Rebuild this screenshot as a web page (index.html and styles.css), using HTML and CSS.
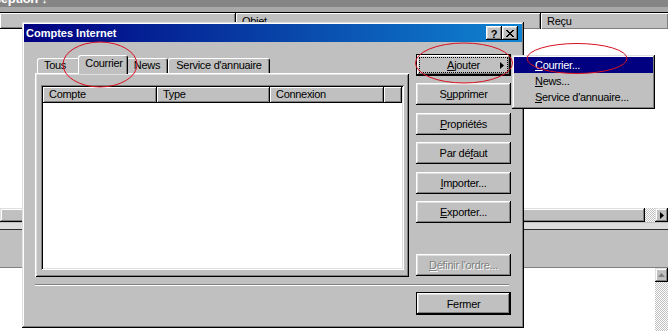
FILE: index.html
```html
<!DOCTYPE html>
<html lang="fr">
<head>
<meta charset="utf-8">
<title>Comptes Internet</title>
<link rel="stylesheet" href="styles.css">
</head>
<body>
<div class="screen">
  <div class="app-top"><span class="app-title">Boîte de réception ↓</span></div>
  <div class="app-sub"></div>
  <div class="colhead">
    <div class="ch ch-1"></div>
    <div class="ch ch-2">Objet</div>
    <div class="ch ch-3">Reçu</div>
  </div>
  <div class="msglist"></div>
  <div class="hscroll">
    <div class="thumb"></div>
    <div class="track"></div>
    <div class="sbtn"><svg width="4" height="7" viewBox="0 0 4 7"><path d="M0 0L4 3.5L0 7z" fill="#000"/></svg></div>
  </div>
  <div class="splitter"></div>
  <div class="preview-head"></div>
  <div class="preview">
    <div class="preview-body"></div>
    <div class="vscroll">
      <div class="sbtn sbtn-up"><svg width="7" height="4" viewBox="0 0 7 4"><path d="M0 4L3.5 0L7 4z" fill="#808080"/></svg></div>
      <div class="track"></div>
    </div>
  </div>
</div>

<div class="dialog">
  <div class="titlebar">
    <span class="title">Comptes Internet</span>
    <div class="tb-btns">
      <span class="tb-btn tb-help">?</span>
      <span class="tb-btn"><svg width="8" height="7" viewBox="0 0 8 7"><path fill="#000" d="M0 0h2v1h-2z M6 0h2v1h-2z M1 1h2v1h-2z M5 1h2v1h-2z M2 2h4v1h-4z M3 3h2v1h-2z M2 4h4v1h-4z M1 5h2v1h-2z M5 5h2v1h-2z M0 6h2v1h-2z M6 6h2v1h-2z"/></svg></span>
    </div>
  </div>
  <div class="dlg-body">
    <div class="main">
      <div class="tabs-col">
        <div class="tabstrip">
          <div class="tab t-tous">Tous</div>
          <div class="tab t-sel">Courrier</div>
          <div class="tab t-news">News</div>
          <div class="tab t-svc">Service d'annuaire</div>
        </div>
        <div class="panel">
          <div class="listview">
            <div class="lv-head">
              <div class="lv-h h-compte">Compte</div>
              <div class="lv-h h-type">Type</div>
              <div class="lv-h h-conn">Connexion</div>
              <div class="lv-h h-rest"></div>
            </div>
            <div class="lv-body"></div>
          </div>
        </div>
      </div>
      <div class="btn-col">
        <button class="btn btn-default btn-focus"><span><u>A</u>jouter</span><svg class="arrow" width="4" height="7" viewBox="0 0 4 7"><path d="M0 0L4 3.5L0 7z" fill="#000"/></svg></button>
        <button class="btn">S<u>u</u>pprimer</button>
        <button class="btn"><u>P</u>ropriétés</button>
        <button class="btn">Par dé<u>f</u>aut</button>
        <button class="btn"><u>I</u>mporter...</button>
        <button class="btn"><u>E</u>xporter...</button>
        <button class="btn btn-disabled btn-last"><u>D</u>éfinir l'ordre...</button>
      </div>
    </div>
    <div class="sep"></div>
    <div class="footer">
      <button class="btn btn-default btn-close">Fermer</button>
    </div>
  </div>
</div>

<div class="menu">
  <div class="mi sel"><u>C</u>ourrier...</div>
  <div class="mi"><u>N</u>ews...</div>
  <div class="mi"><u>S</u>ervice d'annuaire...</div>
</div>

<svg class="annot" width="668" height="331" viewBox="0 0 668 331">
  <ellipse cx="100" cy="64.5" rx="37" ry="22.5" fill="none" stroke="#d81020" stroke-width="1"/>
  <ellipse cx="464" cy="63" rx="48.5" ry="20" fill="none" stroke="#d81020" stroke-width="1"/>
  <ellipse cx="577" cy="58.5" rx="50" ry="15" fill="none" stroke="#d81020" stroke-width="1"/>
</svg>
</body>
</html>
```

FILE: styles.css
```css
* { box-sizing: border-box; }
html, body { margin: 0; padding: 0; }
body {
  width: 668px;
  height: 331px;
  overflow: hidden;
  position: relative;
  background: #fff;
  font-family: "Liberation Sans", Arial, sans-serif;
  font-size: 11px;
  letter-spacing: -0.3px;
  color: #000;
}
u { text-decoration: underline; text-underline-offset: 1px; }

/* background application */
.screen { display: flex; flex-direction: column; height: 331px; }
.app-top { height: 7px; background: #858585; overflow: hidden; }
.app-title {
  display: block;
  color: #fff;
  font-weight: bold;
  font-size: 13px;
  line-height: 13px;
  margin-top: -8px;
  margin-left: -70px;
  white-space: nowrap;
}
.app-sub { height: 6px; background: #a8a8a8; border-bottom: 1px solid #000; }
.colhead { display: flex; height: 16px; background: #c0c0c0; }
.ch {
  padding-left: 6px;
  line-height: 17px;
  box-shadow: inset 1px 1px #fff, inset -1px -1px #808080;
  border-right: 1px solid #000;
  white-space: nowrap;
}
.ch-1 { width: 236px; border-bottom: 1px solid #000; }
.ch-2 { width: 305px; }
.ch-3 { flex: 1; border-right: 0; }
.msglist { height: 179px; background: #fff; }
.hscroll { height: 14px; display: flex; }
.thumb {
  flex: 1;
  background: #c0c0c0;
  box-shadow: inset -1px -1px #000, inset 1px 1px #dfdfdf, inset -2px -2px #808080, inset 2px 2px #fff;
}
.track {
  background: repeating-conic-gradient(#c0c0c0 0 25%, #fff 0 50%) 0 0 / 2px 2px;
}
.hscroll .track { width: 10px; }
.sbtn {
  width: 13px;
  height: 14px;
  background: #c0c0c0;
  box-shadow: inset -1px -1px #000, inset 1px 1px #dfdfdf, inset -2px -2px #808080, inset 2px 2px #fff;
  display: flex;
  align-items: center;
  justify-content: center;
}
.splitter { height: 7px; background: #dcdcdc; border-top: 1px solid #c0c0c0; }
.preview-head {
  height: 39px;
  background: #c0c0c0;
  border-top: 1px solid #303030;
  border-bottom: 1px solid #808080;
}
.preview { flex: 1; display: flex; }
.preview-body { flex: 1; background: #fff; }
.vscroll { width: 13px; display: flex; flex-direction: column; }
.vscroll .track { flex: 1; }

/* dialog */
.dialog {
  position: absolute;
  left: 22px;
  top: 22px;
  width: 502px;
  height: 306px;
  background: #c0c0c0;
  padding: 2px;
  box-shadow: inset -1px -1px #000, inset 1px 1px #dfdfdf, inset -2px -2px #808080, inset 2px 2px #fff;
  display: flex;
  flex-direction: column;
}
.titlebar {
  height: 18px;
  background: linear-gradient(90deg, #000080, #1084d0);
  display: flex;
  align-items: center;
  justify-content: space-between;
  padding: 0 4px 0 2px;
}
.title { color: #fff; font-weight: bold; font-size: 11px; letter-spacing: 0; }
.tb-btns { display: flex; }
.tb-btn {
  width: 16px;
  height: 14px;
  background: #c0c0c0;
  box-shadow: inset -1px -1px #000, inset 1px 1px #fff, inset -2px -2px #808080, inset 2px 2px #dfdfdf;
  display: flex;
  align-items: center;
  justify-content: center;
}
.tb-help { font-weight: bold; font-size: 11px; letter-spacing: 0; line-height: 14px; padding-top: 1px; }

.dlg-body { flex: 1; padding: 13px 11px 0 11px; display: flex; flex-direction: column; }
.main { display: flex; gap: 7px; }
.tabs-col { width: 374px; display: flex; flex-direction: column; }
.tabstrip { height: 18px; display: flex; align-items: flex-end; padding-left: 2px; }
.tab {
  height: 15px;
  background: #c0c0c0;
  border-top: 1px solid #fff;
  border-left: 1px solid #fff;
  border-right: 1px solid #000;
  border-radius: 3px 3px 0 0;
  box-shadow: inset -1px 0 #808080;
  text-align: center;
  line-height: 13px;
  white-space: nowrap;
}
.t-tous { width: 43px; text-align: left; padding-left: 6px; }
.t-sel {
  width: 50px;
  height: 19px;
  margin: 0 -2px -1px -2px;
  position: relative;
  z-index: 1;
  line-height: 15px;
  padding-left: 2px;
}
.t-news { width: 42px; }
.t-svc { width: 102px; }

.panel {
  height: 204px;
  background: #c0c0c0;
  padding: 12px 5px 7px 6px;
  box-shadow: inset 1px 1px #fff, inset -1px -1px #000, inset 2px 2px #dfdfdf, inset -2px -2px #808080;
  display: flex;
}
.listview {
  flex: 1;
  background: #fff;
  padding: 2px;
  box-shadow: inset 1px 1px #808080, inset -1px -1px #fff, inset 2px 2px #000, inset -2px -2px #dfdfdf;
  display: flex;
  flex-direction: column;
}
.lv-head { display: flex; height: 16px; }
.lv-h {
  background: #c0c0c0;
  box-shadow: inset -1px -1px #000, inset 1px 1px #fff, inset -2px -2px #808080;
  padding-left: 6px;
  line-height: 15px;
  white-space: nowrap;
}
.h-compte { width: 114px; }
.h-type { width: 113px; }
.h-conn { width: 114px; }
.h-rest { flex: 1; }
.lv-body { flex: 1; }

.btn-col { width: 95px; display: flex; flex-direction: column; gap: 7.4px; margin-top: -1px; }
.btn {
  appearance: none;
  position: relative;
  width: 95px;
  height: 22px;
  flex: none;
  border: 0;
  padding: 0;
  margin: 0;
  background: #c0c0c0;
  font: inherit;
  letter-spacing: inherit;
  color: #000;
  box-shadow: inset -1px -1px #000, inset 1px 1px #fff, inset -2px -2px #808080, inset 2px 2px #dfdfdf;
  display: flex;
  align-items: center;
  justify-content: center;
}
.btn-default {
  box-shadow: inset 0 0 0 1px #000, inset -2px -2px #000, inset 2px 2px #fff, inset -3px -3px #808080, inset 3px 3px #dfdfdf;
}
.btn-focus { outline: 1px dotted #000; outline-offset: -4px; }
.btn .arrow { position: absolute; right: 7px; top: 8px; }
.btn-disabled { color: #808080; text-shadow: 1px 1px #fff; }
.btn-last { margin-top: auto; margin-bottom: 1px; }
.btn-close { height: 23px; }

.sep { height: 2px; margin: 7px 2px 0 0; border-top: 1px solid #808080; border-bottom: 1px solid #fff; }
.footer { display: flex; justify-content: flex-end; margin-top: 6px; }

/* popup menu */
.menu {
  position: absolute;
  left: 512px;
  top: 55px;
  width: 143px;
  padding: 2px 2px 4px 2px;
  background: #c0c0c0;
  box-shadow: inset -1px -1px #000, inset 1px 1px #dfdfdf, inset -2px -2px #808080, inset 2px 2px #fff;
}
.mi { height: 16px; line-height: 16px; padding-left: 21px; white-space: nowrap; }
.mi.sel { background: #000080; color: #fff; }

.annot { position: absolute; left: 0; top: 0; pointer-events: none; z-index: 10; }
```
